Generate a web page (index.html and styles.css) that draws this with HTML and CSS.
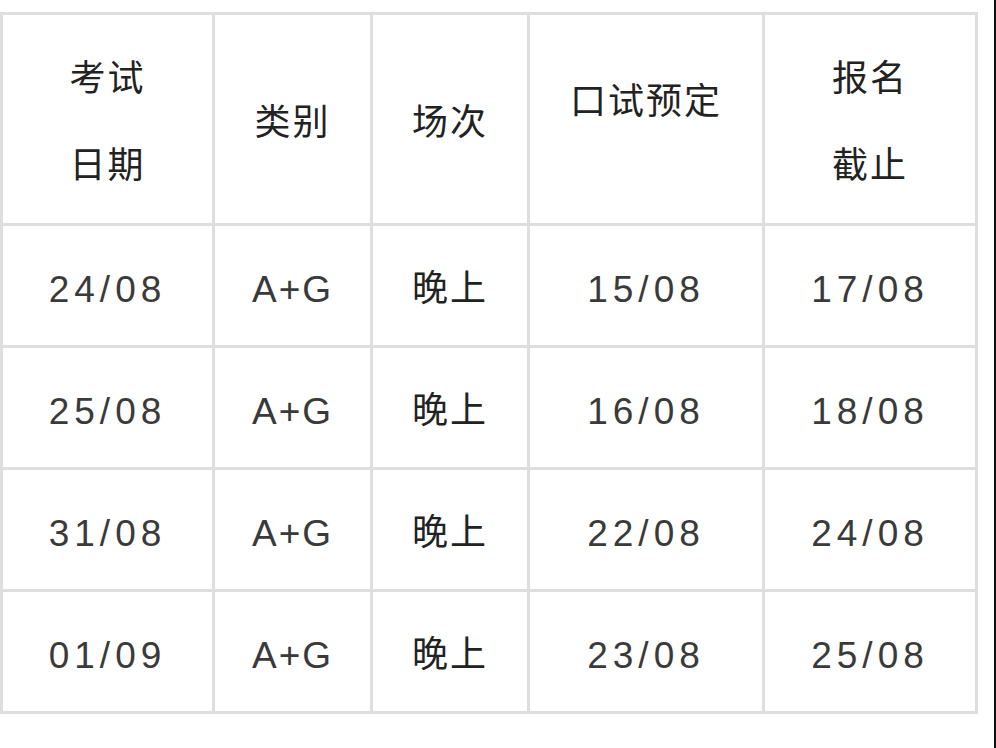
FILE: index.html
```html
<!DOCTYPE html>
<html lang="zh">
<head>
<meta charset="utf-8">
<title>考试安排</title>
<link rel="stylesheet" href="styles.css">
</head>
<body>
<div class="page">
  <div class="grid">
    <div class="cell head"><span class="cjk">考试</span><span class="cjk">日期</span></div>
    <div class="cell head"><span class="cjk">类别</span></div>
    <div class="cell head"><span class="cjk">场次</span></div>
    <div class="cell head raised"><span class="cjk">口试预定</span></div>
    <div class="cell head"><span class="cjk">报名</span><span class="cjk">截止</span></div>

    <div class="cell"><span class="num">24/08</span></div>
    <div class="cell"><span class="num ag">A+G</span></div>
    <div class="cell"><span class="cjk">晚上</span></div>
    <div class="cell"><span class="num">15/08</span></div>
    <div class="cell"><span class="num">17/08</span></div>

    <div class="cell"><span class="num">25/08</span></div>
    <div class="cell"><span class="num ag">A+G</span></div>
    <div class="cell"><span class="cjk">晚上</span></div>
    <div class="cell"><span class="num">16/08</span></div>
    <div class="cell"><span class="num">18/08</span></div>

    <div class="cell"><span class="num">31/08</span></div>
    <div class="cell"><span class="num ag">A+G</span></div>
    <div class="cell"><span class="cjk">晚上</span></div>
    <div class="cell"><span class="num">22/08</span></div>
    <div class="cell"><span class="num">24/08</span></div>

    <div class="cell"><span class="num">01/09</span></div>
    <div class="cell"><span class="num ag">A+G</span></div>
    <div class="cell"><span class="cjk">晚上</span></div>
    <div class="cell"><span class="num">23/08</span></div>
    <div class="cell"><span class="num">25/08</span></div>
  </div>
  <div class="edge"></div>
</div>
</body>
</html>
```
FILE: styles.css
```css
html, body {
  margin: 0;
  padding: 0;
  background: #ffffff;
}

.page {
  width: 996px;
  height: 748px;
  display: flex;
  justify-content: space-between;
  align-items: flex-start;
  overflow: hidden;
}

.grid {
  margin-top: 12px;
  display: grid;
  grid-template-columns: 209px 155px 154px 232px 210px;
  grid-template-rows: 208px 119px 119px 119px 119px;
  gap: 3px;
  padding: 3px;
  background: #dedede;
}

.cell {
  background: #ffffff;
  display: flex;
  flex-direction: column;
  align-items: center;
  justify-content: center;
  color: #333333;
  box-sizing: border-box;
}

.cell.raised {
  padding-bottom: 41px;
}

.cjk {
  font-family: "Noto Sans CJK SC", "Liberation Sans", sans-serif;
  font-size: 36px;
  font-weight: 400;
  line-height: 87px;
  letter-spacing: 2px;
  color: #222222;
}

.num {
  font-family: "Liberation Sans", "Noto Sans CJK SC", sans-serif;
  font-size: 37px;
  line-height: 44px;
  letter-spacing: 5px;
  margin-top: 9px;
  color: #3a3a3a;
}

.num.ag {
  letter-spacing: 2px;
}

.edge {
  width: 2px;
  height: 748px;
  background: #111111;
}
```
